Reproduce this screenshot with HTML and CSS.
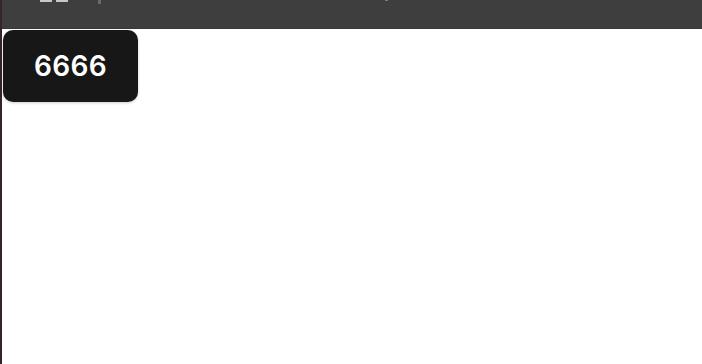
FILE: index.html
```html
<!DOCTYPE html>
<html lang="en">
<head>
    <meta charset="UTF-8">
    <meta name="viewport" content="width=device-width, initial-scale=1.0">
    <title>6666</title>
    <link rel="stylesheet" href="styles.css">
</head>
<body>
    <div class="frame">
        <div class="toolbar">
            <span class="grip"><i></i><i></i></span>
            <span class="divider"></span>
            <span class="dot"></span>
        </div>
        <div class="content">
            <button type="button" class="count-btn">6666</button>
        </div>
    </div>
</body>
</html>
```

FILE: styles.css
```css
* {
    margin: 0;
    padding: 0;
    box-sizing: border-box;
}

body {
    width: 702px;
    height: 364px;
    overflow: hidden;
    background: #fff;
    font-family: "Inter", "Open Sans", sans-serif;
}

.frame {
    height: 100%;
    border-left: 2px solid #33242e;
    display: flex;
    flex-direction: column;
}

.toolbar {
    height: 29px;
    background: #3e3e3e;
    border-bottom: 1px solid #383838;
    display: flex;
    align-items: flex-start;
}

.grip {
    display: flex;
    gap: 4px;
    margin-left: 38px;
}

.grip i {
    display: block;
    width: 12px;
    height: 2px;
    background: #c8c8c8;
}

.divider {
    width: 3px;
    height: 4px;
    margin-left: 30px;
    background: #6a6a6a;
}

.dot {
    width: 3px;
    height: 1px;
    margin-left: 284px;
    background: #7a7a7a;
}

.content {
    flex: 1;
    padding: 1px 0 0 1px;
}

.count-btn {
    width: 135px;
    height: 72px;
    border: none;
    border-radius: 10px;
    background: #171717;
    color: #fff;
    font-family: "Inter", "Open Sans", sans-serif;
    font-size: 28px;
    font-weight: 600;
    letter-spacing: 0.3px;
    box-shadow: 0 1px 3px rgba(0, 0, 0, 0.2);
    cursor: pointer;
}
```
